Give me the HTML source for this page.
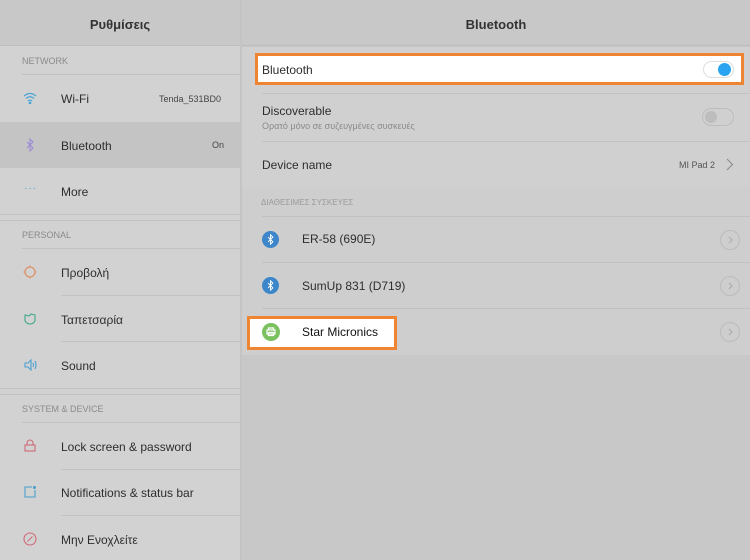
<!DOCTYPE html>
<html><head><meta charset="utf-8"><style>
*{margin:0;padding:0;box-sizing:border-box}
body{width:750px;height:560px;overflow:hidden;background:#c8c8c8;font-family:"Liberation Sans","Noto Sans CJK SC",sans-serif;position:relative;color:#2e2e2e}
.a{position:absolute}
.t{font-size:12px;position:absolute;white-space:nowrap}
.h{height:1px;background:#c2c2c2;position:absolute}
.sec{font-size:9px;color:#8a8a8a;position:absolute}
</style></head><body>
<!-- left -->
<div class="a" style="left:0;top:0;width:240px;height:560px;background:#d2d2d2"></div>
<div class="a" style="left:0;top:0;width:240px;height:46px;background:#c8c8c8;border-bottom:1px solid #bdbdbd"></div>
<div class="t" style="left:0;width:240px;text-align:center;top:17px;font-size:13px;font-weight:bold;color:#333">Ρυθμίσεις</div>
<div class="a" style="left:240px;top:0;width:2px;height:560px;background:#c4c4c4"></div>
<div class="sec" style="left:22px;top:56px">NETWORK</div>
<div class="h" style="left:22px;top:74px;width:218px"></div>
<svg class="a" style="left:23px;top:92px" width="14" height="12" viewBox="0 0 14 12" fill="none" stroke="#4aa6d6" stroke-width="1.2"><path d="M1 4Q7-1 13 4M3 6.5Q7 3 11 6.5M5 9Q7 7.5 9 9"/><circle cx="7" cy="11" r=".8" fill="#4aa6d6"/></svg>
<div class="t" style="left:61px;top:92px">Wi-Fi</div>
<div class="t" style="left:159px;top:94px;font-size:9px;color:#444">Tenda_531BD0</div>
<div class="a" style="left:0;top:122px;width:240px;height:46px;background:#c4c4c4"></div>
<svg class="a" style="left:25px;top:138px" width="10" height="14" viewBox="0 0 10 14" fill="none" stroke="#9b8ad6" stroke-width="1"><path d="M2 4l6 6-3 3V1l3 3-6 6"/></svg>
<div class="t" style="left:61px;top:139px">Bluetooth</div>
<div class="t" style="left:212px;top:140px;font-size:9px;color:#444">On</div>
<div class="t" style="left:24px;top:183px;font-size:10px;color:#4aa6d6;letter-spacing:1px">···</div>
<div class="t" style="left:61px;top:185px">More</div>
<div class="h" style="left:0;top:214px;width:240px"></div>
<div class="h" style="left:0;top:220px;width:240px"></div>
<div class="sec" style="left:22px;top:230px">PERSONAL</div>
<div class="h" style="left:22px;top:248px;width:218px"></div>
<svg class="a" style="left:23px;top:265px" width="14" height="14" viewBox="0 0 14 14" fill="none" stroke="#e08a5a" stroke-width="1.1"><circle cx="7" cy="7" r="5"/><path d="M7 0.5v1.5M7 12v1.5M0.5 7h1.5M12 7h1.5"/></svg>
<div class="t" style="left:61px;top:266px">Προβολή</div>
<div class="h" style="left:61px;top:295px;width:179px"></div>
<svg class="a" style="left:24px;top:313px" width="12" height="12" viewBox="0 0 12 12" fill="none" stroke="#3ea88a" stroke-width="1.1"><path d="M1 2l4 1 2-2 4 1v5a5 4 0 0 1-10 0z"/></svg>
<div class="t" style="left:61px;top:313px">Ταπετσαρία</div>
<div class="h" style="left:61px;top:341px;width:179px"></div>
<svg class="a" style="left:24px;top:359px" width="13" height="12" viewBox="0 0 13 12" fill="none" stroke="#4a9fd0" stroke-width="1.1"><path d="M1 4h3l3-3v10L4 8H1z"/><path d="M9 4q1 2 0 4M11 2q2 4 0 8"/></svg>
<div class="t" style="left:61px;top:359px">Sound</div>
<div class="h" style="left:0;top:388px;width:240px"></div>
<div class="h" style="left:0;top:394px;width:240px"></div>
<div class="sec" style="left:22px;top:404px">SYSTEM &amp; DEVICE</div>
<div class="h" style="left:22px;top:422px;width:218px"></div>
<svg class="a" style="left:24px;top:439px" width="12" height="13" viewBox="0 0 12 13" fill="none" stroke="#d06a78" stroke-width="1.1"><rect x="1" y="6" width="10" height="6"/><path d="M3 6V4a3 3 0 0 1 6 0v2"/></svg>
<div class="t" style="left:61px;top:440px">Lock screen &amp; password</div>
<div class="h" style="left:61px;top:469px;width:179px"></div>
<svg class="a" style="left:24px;top:486px" width="12" height="12" viewBox="0 0 12 12" fill="none" stroke="#4a9fd0" stroke-width="1.1"><path d="M8 1H1v10h10V4"/><circle cx="10.5" cy="1.5" r="1" fill="#4a9fd0"/></svg>
<div class="t" style="left:61px;top:486px">Notifications &amp; status bar</div>
<div class="h" style="left:61px;top:515px;width:179px"></div>
<svg class="a" style="left:23px;top:532px" width="14" height="14" viewBox="0 0 14 14" fill="none" stroke="#d06a78" stroke-width="1.1"><circle cx="7" cy="7" r="6"/><path d="M4.5 9.5l5-5"/></svg>
<div class="t" style="left:61px;top:533px">Μην Ενοχλείτε</div>
<!-- right -->
<div class="a" style="left:242px;top:0;width:508px;height:46px;background:#c8c8c8;border-bottom:1px solid #bdbdbd"></div>
<div class="t" style="left:242px;width:508px;text-align:center;top:17px;font-size:13px;font-weight:bold;color:#333">Bluetooth</div>
<div class="a" style="left:242px;top:47px;width:508px;height:140px;background:#d0d0d0"></div>
<div class="a" style="left:255px;top:53px;width:489px;height:32px;background:#fff;border:3px solid #ef8432"></div>
<div class="t" style="left:262px;top:63px">Bluetooth</div>
<div class="a" style="left:703px;top:61px;width:31px;height:17px;border:1px solid #ddd;border-radius:9px;background:#fff"></div>
<div class="a" style="left:718px;top:63px;width:13px;height:13px;border-radius:50%;background:#2aa3f0"></div>
<div class="h" style="left:262px;top:93px;width:488px"></div>
<div class="t" style="left:262px;top:104px">Discoverable</div>
<div class="t" style="left:262px;top:121px;font-size:9px;color:#8a8a8a">Ορατό μόνο σε συζευγμένες συσκευές</div>
<div class="a" style="left:702px;top:108px;width:32px;height:18px;border:1px solid #bdbdbd;border-radius:9px"></div>
<div class="a" style="left:705px;top:111px;width:12px;height:12px;border-radius:50%;background:#bdbdbd"></div>
<div class="h" style="left:262px;top:141px;width:488px"></div>
<div class="t" style="left:262px;top:158px">Device name</div>
<div class="t" style="left:679px;top:160px;font-size:9px;color:#555">MI Pad 2</div>
<svg class="a" style="left:726px;top:158px" width="8" height="13" viewBox="0 0 8 13" fill="none" stroke="#888" stroke-width="1"><path d="M1 1l5.5 5.5L1 12"/></svg>
<div class="a" style="left:242px;top:187px;width:508px;height:168px;background:#cecece"></div>
<div class="t" style="left:261px;top:198px;font-size:8px;color:#9a9a9a">ΔΙΑΘΕΣΙΜΕΣ ΣΥΣΚΕΥΕΣ</div>
<div class="h" style="left:262px;top:216px;width:488px"></div>
<div class="a" style="left:262px;top:231px;width:17px;height:17px;border-radius:50%;background:#3d86c9"></div>
<svg class="a" style="left:266px;top:234px" width="9" height="11" viewBox="0 0 10 14" fill="none" stroke="#fff" stroke-width="1.2"><path d="M2 4l6 6-3 3V1l3 3-6 6"/></svg>
<div class="t" style="left:302px;top:232px">ER-58 (690E)</div>
<div class="a" style="left:720px;top:230px;width:20px;height:20px;border-radius:50%;border:1px solid #bbb"></div>
<svg class="a" style="left:728px;top:236px" width="5" height="8" viewBox="0 0 5 8" fill="none" stroke="#aaa"><path d="M1 1l3 3-3 3"/></svg>
<div class="h" style="left:262px;top:262px;width:488px"></div>
<div class="a" style="left:262px;top:277px;width:17px;height:17px;border-radius:50%;background:#3d86c9"></div>
<svg class="a" style="left:266px;top:280px" width="9" height="11" viewBox="0 0 10 14" fill="none" stroke="#fff" stroke-width="1.2"><path d="M2 4l6 6-3 3V1l3 3-6 6"/></svg>
<div class="t" style="left:302px;top:279px">SumUp 831 (D719)</div>
<div class="a" style="left:720px;top:276px;width:20px;height:20px;border-radius:50%;border:1px solid #bbb"></div>
<svg class="a" style="left:728px;top:282px" width="5" height="8" viewBox="0 0 5 8" fill="none" stroke="#aaa"><path d="M1 1l3 3-3 3"/></svg>
<div class="h" style="left:262px;top:308px;width:488px"></div>
<div class="a" style="left:720px;top:322px;width:20px;height:20px;border-radius:50%;border:1px solid #bbb"></div>
<svg class="a" style="left:728px;top:328px" width="5" height="8" viewBox="0 0 5 8" fill="none" stroke="#aaa"><path d="M1 1l3 3-3 3"/></svg>
<div class="a" style="left:247px;top:316px;width:150px;height:34px;background:#fff;border:3px solid #ef8432"></div>
<div class="a" style="left:262px;top:323px;width:18px;height:18px;border-radius:50%;background:#7cc160"></div>
<svg class="a" style="left:265px;top:326px" width="12" height="12" viewBox="0 0 12 12" fill="none" stroke="#fff" stroke-width="1.2"><rect x="2" y="4" width="8" height="4"/><rect x="3.5" y="6.5" width="5" height="3"/><path d="M3.5 4V2h5v2"/></svg>
<div class="t" style="left:302px;top:325px;color:#111">Star Micronics</div>
</body></html>
